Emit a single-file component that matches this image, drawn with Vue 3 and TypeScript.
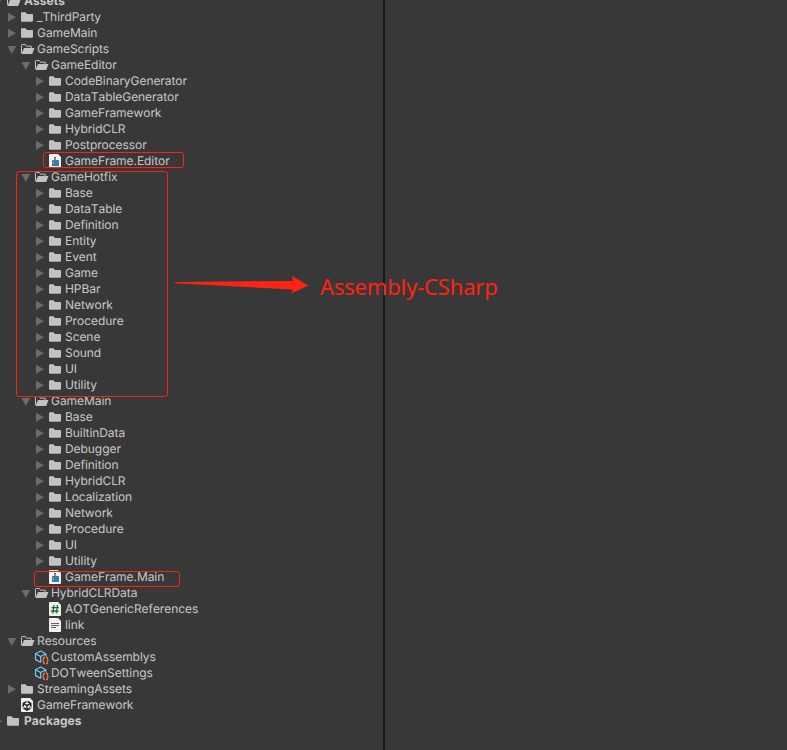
<script setup lang="ts">
type IconKind = 'folder' | 'open' | 'asmdef' | 'script' | 'text' | 'asset' | 'scene'
type Arrow = 'none' | 'closed' | 'open'

interface Row {
  depth: number
  label: string
  icon: IconKind
  arrow: Arrow
}

const closed = (depth: number, ...labels: string[]): Row[] =>
  labels.map((label) => ({ depth, label, icon: 'folder', arrow: 'closed' }))
const opened = (depth: number, label: string): Row => ({ depth, label, icon: 'open', arrow: 'open' })
const file = (depth: number, label: string, icon: IconKind): Row => ({ depth, label, icon, arrow: 'none' })

const rows: Row[] = [
  opened(0, 'Assets'),
  ...closed(1, '_ThirdParty', 'GameMain'),
  opened(1, 'GameScripts'),
  opened(2, 'GameEditor'),
  ...closed(3, 'CodeBinaryGenerator', 'DataTableGenerator', 'GameFramework', 'HybridCLR', 'Postprocessor'),
  file(3, 'GameFrame.Editor', 'asmdef'),
  opened(2, 'GameHotfix'),
  ...closed(3, 'Base', 'DataTable', 'Definition', 'Entity', 'Event', 'Game', 'HPBar', 'Network', 'Procedure', 'Scene', 'Sound', 'UI', 'Utility'),
  opened(2, 'GameMain'),
  ...closed(3, 'Base', 'BuiltinData', 'Debugger', 'Definition', 'HybridCLR', 'Localization', 'Network', 'Procedure', 'UI', 'Utility'),
  file(3, 'GameFrame.Main', 'asmdef'),
  opened(2, 'HybridCLRData'),
  file(3, 'AOTGenericReferences', 'script'),
  file(3, 'link', 'text'),
  opened(1, 'Resources'),
  file(2, 'CustomAssemblys', 'asset'),
  file(2, 'DOTweenSettings', 'asset'),
  ...closed(1, 'StreamingAssets'),
  file(1, 'GameFramework', 'scene'),
  ...closed(0, 'Packages'),
]
</script>

<template>
  <main class="project">
    <section class="tree">
      <div v-for="(row, i) in rows" :key="i" class="row" :class="['depth-' + row.depth]">
        <svg class="arrow" viewBox="0 0 12 16">
          <path v-if="row.arrow === 'closed'" d="M2 3.8 L10 8.3 L2 12.8Z" />
          <path v-if="row.arrow === 'open'" d="M1.3 5 H10.3 L5.8 12.8Z" />
        </svg>
        <svg class="icon" viewBox="0 0 16 16">
          <path v-if="row.icon === 'folder'" fill="#c2c2c2" d="M2 4.2 Q2 3.3 3 3.3 H6.3 Q7 3.3 7.3 4 L7.7 5 H13 Q14 5 14 6 V11.8 Q14 12.8 13 12.8 H3 Q2 12.8 2 11.8Z" />
          <g v-else-if="row.icon === 'open'">
            <path fill="none" stroke="#c2c2c2" d="M2.5 12 V4.2 Q2.5 3.5 3.2 3.5 H6.3 L7.5 5.2 H12.3 V7" />
            <path fill="#c2c2c2" d="M5 7 H15.5 L13.2 13 H2.4Z" />
          </g>
          <g v-else-if="row.icon === 'asset'" fill="none">
            <path stroke="#72c7ef" stroke-width="1.2" stroke-linejoin="round" d="M8 13 L7.5 13.3 L2.5 10.6 V4.7 L7.7 2 L12.8 4.7 V7.5 M2.5 4.7 L7.7 7.5 L12.8 4.7 M7.7 7.5 V13" />
            <path stroke="#ff6a3c" stroke-width="1.3" d="M12 8.5 H11.2 Q10.5 8.5 10.5 9.3 V10.5 Q10.5 11.4 9.4 11.4 Q10.5 11.4 10.5 12.2 V13.7 Q10.5 14.5 11.2 14.5 H12 M13 8.5 H13.8 Q14.5 8.5 14.5 9.3 V10.5 Q14.5 11.4 15.6 11.4 Q14.5 11.4 14.5 12.2 V13.7 Q14.5 14.5 13.8 14.5 H13" />
          </g>
          <g v-else>
            <path fill="#f0f0f0" d="M3 1 H11 L14 4 V14 Q14 15 13 15 H3 Q2 15 2 14 V2 Q2 1 3 1Z" />
            <path v-if="row.icon === 'asmdef'" fill="#3a7ba5" d="M7 4 H9 V7 H11 Q12 7 12 8 V13 H5 V8 Q5 7 6 7 H7Z" />
            <path v-if="row.icon === 'asmdef'" fill="#84b2ce" d="M6 9 H7 V11 H6Z M7 5.6 H9 V6.6 H7Z" />
            <path v-if="row.icon === 'script'" fill="none" stroke="#236b31" stroke-width="1.3" d="M7 4 L5.8 12.5 M10.5 4 L9.3 12.5 M4.5 6.7 H12 M4 10 H11.5" />
            <path v-if="row.icon === 'text'" fill="none" stroke="#666" d="M4 6.5 H12 M4 8.5 H12 M4 10.5 H9" />
            <g v-if="row.icon === 'scene'">
              <path fill="none" stroke="#222" stroke-width="1.6" d="M8 4.3 L11.7 6.4 V10.8 L8 13 L4.3 10.8 V6.4Z" />
              <path fill="none" stroke="#222" stroke-width="1.4" d="M8 8.7 V13 M8 8.7 L4.3 6.4 M8 8.7 L11.7 6.4" />
              <path fill="#f0f0f0" d="M7.4 3 H8.6 V5.2 H7.4Z M3.6 10 L5.2 9.6 V10.8 L4 11.6Z M12.4 10 L10.8 9.6 V10.8 L12 11.6Z" />
            </g>
          </g>
        </svg>
        <span class="label">{{ row.label }}</span>
      </div>
    </section>
    <section class="content"></section>

    <div class="mark mark-editor"></div>
    <div class="mark mark-hotfix"></div>
    <div class="mark mark-main"></div>
    <svg class="pointer" viewBox="0 0 136 20">
      <path d="M1 7 L119 6 L118 1 L134.5 10.5 L117 18.5 L119 14.5 L1 8.3Z" />
    </svg>
    <span class="note">Assembly-CSharp</span>
  </main>
</template>

<style>
body {
  background: #383838;
  overflow: hidden;
}
</style>

<style scoped>
.project {
  position: relative;
  display: flex;
  width: 787px;
  height: 750px;
  overflow: hidden;
  background: #383838;
  font-family: Inter, 'Liberation Sans', sans-serif;
}
.tree {
  width: 383px;
  flex: none;
  margin-top: -7px;
  display: flex;
  flex-direction: column;
}
.content {
  flex: 1;
  border-left: 2px solid #191919;
}
.row {
  display: flex;
  align-items: center;
  height: 16px;
  flex: none;
  padding-left: 6px;
}
.depth-0 { margin-left: -14px; }
.depth-2 { padding-left: 20px; }
.depth-3 { padding-left: 34px; }
.arrow {
  width: 12px;
  height: 16px;
  flex: none;
  fill: #6b6b6b;
}
.icon {
  width: 16px;
  height: 16px;
  flex: none;
  margin-left: 1px;
}
.label {
  margin-left: 2px;
  font-size: 12px;
  line-height: 16px;
  letter-spacing: -0.06px;
  font-kerning: none;
  text-rendering: geometricPrecision;
  color: #c8c8c8;
  white-space: nowrap;
}
.depth-0 .label {
  font-weight: 700;
  letter-spacing: 0.05px;
  margin-left: 3px;
}
.mark {
  position: absolute;
  box-sizing: border-box;
  border: 1px solid #f9230f;
  border-radius: 3px;
}
.mark-editor { left: 43px; top: 152px; width: 141px; height: 16px; }
.mark-hotfix { left: 16px; top: 171px; width: 152px; height: 226px; }
.mark-main { left: 34px; top: 571px; width: 146px; height: 16px; }
.pointer {
  position: absolute;
  left: 174px;
  top: 275px;
  width: 136px;
  height: 20px;
  fill: #ff2313;
}
.note {
  position: absolute;
  left: 320px;
  top: 271px;
  font-family: 'Noto Sans', 'Open Sans', sans-serif;
  font-size: 22px;
  line-height: 30px;
  letter-spacing: -0.17px;
  color: #ff2313;
  white-space: nowrap;
}
</style>
